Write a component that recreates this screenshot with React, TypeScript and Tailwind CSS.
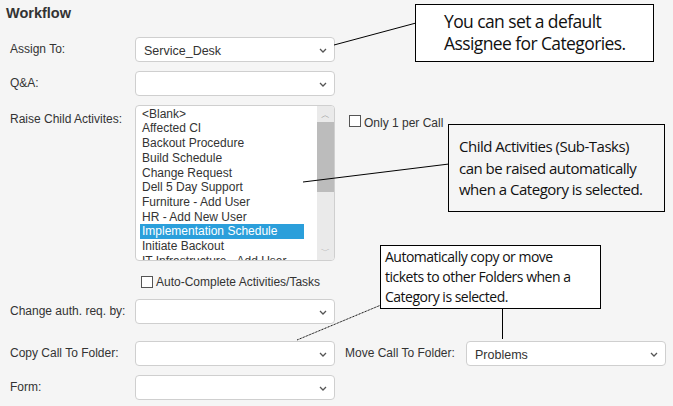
import React from "react";

const Chevron = () => (
  <svg width="8" height="5" viewBox="0 0 8 5" className="absolute right-[7px] top-[10px]">
    <path d="M1 1 L4 4 L7 1" stroke="#555" strokeWidth="1.3" fill="none" />
  </svg>
);

const Select = ({ value = "", w = "w-[200px]" }: { value?: string; w?: string }) => (
  <div className={`relative ${w} h-[25px] bg-white border border-[#cfcfcf] rounded-[4px] text-[12.5px] text-[#333] pl-[8px] pt-[4px]`}>
    {value}
    <Chevron />
  </div>
);

const Label = ({ children }: { children: React.ReactNode }) => (
  <div className="w-[125px] text-[12px] text-[#333]">{children}</div>
);

const items = [
  "<Blank>", "Affected CI", "Backout Procedure", "Build Schedule", "Change Request",
  "Dell 5 Day Support", "Furniture - Add User", "HR - Add New User",
  "Implementation Schedule", "Initiate Backout", "IT Infrastructure - Add User",
];

export default function App() {
  return (
    <div className="relative w-[673px] h-[406px] bg-[#f5f5f5] overflow-hidden" style={{ fontFamily: '"Liberation Sans", Arial, sans-serif' }}>
      <div className="pl-[6px] pt-[3px] text-[14.5px] font-bold text-[#333]">Workflow</div>
      <div className="flex flex-col pl-[10px] pt-[12px]">
        <div className="flex items-center h-[25px]"><Label>Assign To:</Label><Select value="Service_Desk" /></div>
        <div className="flex items-center h-[25px] mt-[9px]"><Label>Q&amp;A:</Label><Select /></div>
        <div className="flex mt-[9px]">
          <Label><div className="pt-[5px]">Raise Child Activites:</div></Label>
          <div className="relative w-[200px] h-[156px] bg-white border border-[#cfcfcf] rounded-[4px] overflow-hidden text-[12px] text-[#333] leading-[14.7px] pt-[1px]">
            {items.map((t) => (
              <div key={t} className={`pl-[2px] mr-[30px] ml-[4px] whitespace-nowrap ${t === "Implementation Schedule" ? "bg-[#2b9fdb] text-white" : ""}`}>{t}</div>
            ))}
            <div className="absolute right-0 top-0 w-[17px] h-full bg-[#eaeaea] flex flex-col items-center">
              <div className="h-[16px] text-[9px] text-[#999] pt-[2px]">︿</div>
              <div className="w-full h-[70px] bg-[#bcbcbc]" />
              <div className="flex-1" />
              <div className="h-[16px] text-[9px] text-[#999]">﹀</div>
            </div>
          </div>
          <div className="flex items-start ml-[14px] pt-[9px] text-[12px] text-[#333]">
            <div className="w-[12px] h-[12px] border border-[#555] bg-white mr-[3px] mt-[1px]" />Only 1 per Call
          </div>
        </div>
        <div className="flex items-center ml-[131px] mt-[12px] text-[12px] text-[#333]">
          <div className="w-[12px] h-[12px] border border-[#555] bg-white mr-[3px]" />Auto-Complete Activities/Tasks
        </div>
        <div className="flex items-center h-[25px] mt-[8px]"><Label>Change auth. req. by:</Label><Select /></div>
        <div className="flex items-center h-[25px] mt-[17px]">
          <Label>Copy Call To Folder:</Label><Select />
          <div className="ml-[10px] w-[121px] text-[12px] text-[#333]">Move Call To Folder:</div>
          <Select value="Problems" />
        </div>
        <div className="flex items-center h-[25px] mt-[9px]"><Label>Form:</Label><Select /></div>
      </div>

      <svg className="absolute inset-0" width="673" height="406">
        <line x1="334" y1="45" x2="416" y2="23" stroke="#000" strokeWidth="1" />
        <line x1="303" y1="182" x2="449" y2="164" stroke="#000" strokeWidth="1" />
        <line x1="297" y1="340" x2="381" y2="305" stroke="#000" strokeWidth="1" strokeDasharray="1 0.6" />
        <line x1="502.5" y1="308" x2="502.5" y2="339" stroke="#000" strokeWidth="1" />
      </svg>

      <div className="absolute left-[415px] top-[4px] w-[239px] h-[58px] bg-white border border-black text-[17.5px] leading-[22px] text-[#111] pl-[28px] pt-[5px] tracking-[-0.6px]" style={{ fontFamily: '"Open Sans", sans-serif' }}>
        You can set a default<br />Assignee for Categories.
      </div>
      <div className="absolute left-[448px] top-[124px] w-[217px] h-[88px] bg-[#f5f5f5] border border-black text-[15px] leading-[21.5px] text-[#111] pl-[10px] pt-[11px] tracking-[-0.5px]" style={{ fontFamily: '"Open Sans", sans-serif' }}>
        Child Activities (Sub-Tasks)<br />can be raised automatically<br />when a Category is selected.
      </div>
      <div className="absolute left-[380px] top-[245px] w-[221px] h-[64px] bg-white border border-black text-[14px] leading-[20px] text-[#111] pl-[4px] pt-[1px] tracking-[-0.5px]" style={{ fontFamily: '"Open Sans", sans-serif' }}>
        Automatically copy or move<br />tickets to other Folders when a<br />Category is selected.
      </div>
    </div>
  );
}
